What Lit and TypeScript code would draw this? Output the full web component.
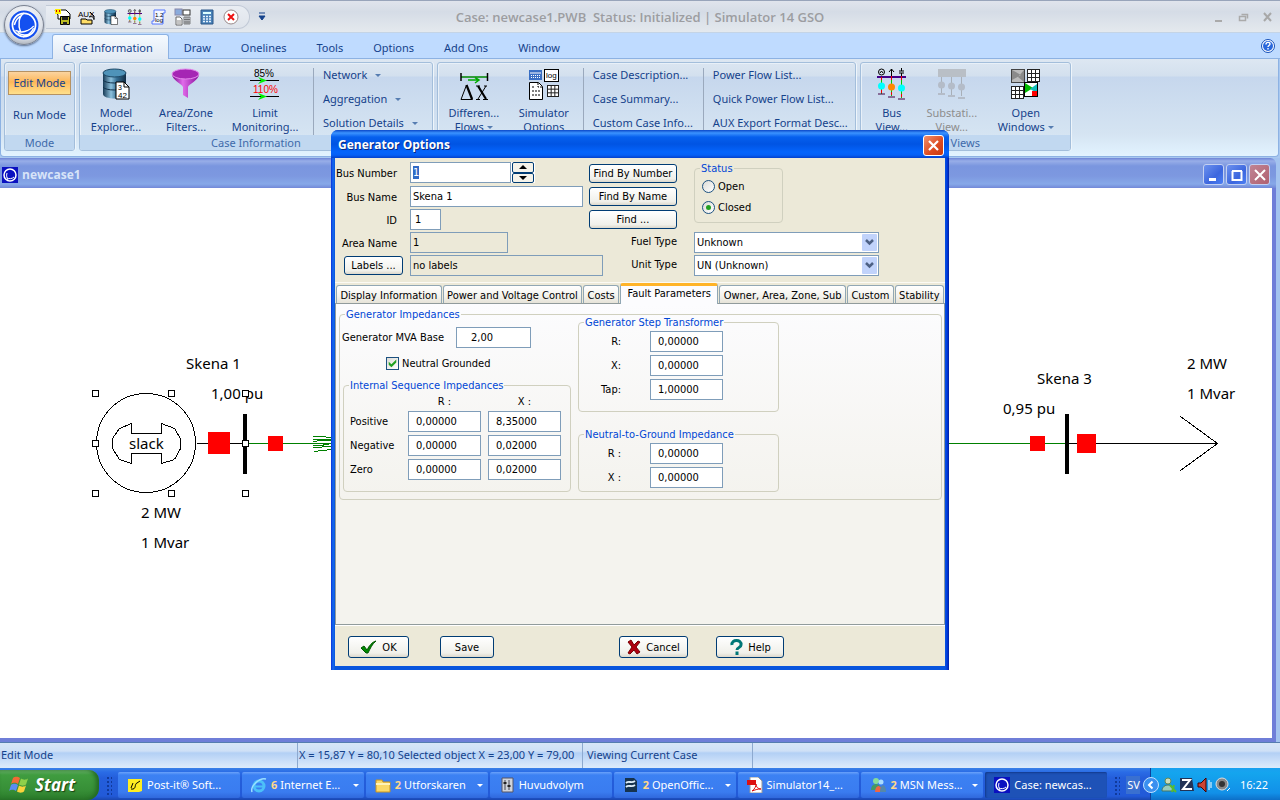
import { LitElement, html, svg, css, nothing } from "lit";
import { customElement, query } from "lit/decorators.js";
import { classMap } from "lit/directives/class-map.js";

const globe = (size: number) => html`
  <svg width=${size} height=${size} viewBox="0 0 28 28" aria-hidden="true">
    <circle cx="14" cy="14" r="13.500" fill="#1450f0" />
    <circle cx="14" cy="14" r="10.800" fill="none" stroke="#fff" stroke-width="1.600" />
    <path d="M14 3C9 6 8 14 11 21M6 19c6 3 12 1 17-4M12 5c-4 2-6 5-7 9M13 25c5-1 8-4 10-8M8 21c4 3 8 3 12 1" fill="none" stroke="#fff" stroke-width="1.400" />
    <path d="M14 5c4-1 7 1 8 5l1 4c-3 4-6 5-10 4-3-5-2-10 1-13z" fill="#1450f0" />
  </svg>`;

const badge = html`
  <svg width="16" height="16" viewBox="0 0 16 16" aria-hidden="true">
    <rect width="16" height="16" fill="#0a10c0" />
    <circle cx="8" cy="8" r="6" fill="none" stroke="#fff" stroke-width="1.500" />
    <path d="M5 11c2 1 5 1 7-1M5 6c-1 3 0 5 1 7" fill="none" stroke="#fff" />
  </svg>`;

const busBars = svg`
  <path d="M1 9h29" stroke="#408" stroke-width="2" />
  <path d="M5.500 9v17M15.500 9v19M25.500 9v21" stroke="#0c0" />
  <path d="M5.500 9v3M15.500 9v3M25.500 9v3M15.500 24v3M5.500 22v3M25.500 26v3M15.500 5v4M25.500 5v4" stroke="#e00" />
  <path d="M2 26h7M12 29h7M22 31h7" stroke="#404" />
  <circle cx="5.500" cy="18" r="3.500" fill="#0ff" /><circle cx="15.500" cy="19" r="3.500" fill="#f80" /><circle cx="25.500" cy="20" r="3.500" fill="#0ff" />
  <circle cx="5.500" cy="4" r="3" fill="none" stroke="#000" /><path d="M4 5l1.500-2L7 5" fill="none" stroke="#000" />
  <path d="M15.500 8V1M13 4l2.500-3L18 4M25.500 0v3M23 3h5M23 5h5M25.500 5v3" fill="none" stroke="#000" />`;

const cylinder = (id: string) => svg`
  <defs><linearGradient id=${id}><stop offset="0" stop-color="#173a56" /><stop offset=".35" stop-color="#8cc0dc" /><stop offset=".6" stop-color="#356e93" /><stop offset="1" stop-color="#122c44" /></linearGradient></defs>
  <path d="M3 5v21c0 6 23 6 23 0V5z" fill="url(#${id})" />
  <ellipse cx="14.500" cy="5" rx="11.500" ry="4" fill="#4f93b9" stroke="#1d4866" />
  <path d="M3 12c2 4 21 4 23 0M3 19c2 4 21 4 23 0" fill="none" stroke="#12324c" />
  <path d="M16 14h8l5 5v12H16z" fill="#fff" stroke="#000" /><path d="M24 14v5h5" fill="none" stroke="#000" />`;

const gridGlyph = (x: number, y: number, s: number) => svg`
  <rect x=${x} y=${y} width=${s} height=${s} fill="#fff" stroke="#222" />
  <path d="M${x + s / 3} ${y}v${s}M${x + (2 * s) / 3} ${y}v${s}M${x} ${y + s / 3}h${s}M${x} ${y + (2 * s) / 3}h${s}" stroke="#222" />`;

const ribbonIcons: Record<string, unknown> = {
  model: svg`${cylinder("cyl")}
    <text x="18" y="22" font-size="7">3</text><text x="18" y="30" font-size="8">42</text>`,
  funnel: svg`
    <defs><linearGradient id="fun"><stop offset="0" stop-color="#7a0a8c" /><stop offset=".4" stop-color="#e06bea" /><stop offset="1" stop-color="#8a0f9c" /></linearGradient></defs>
    <path d="M2 6c0 6 10 10 11 13v8l5 3V19c1-3 11-7 11-13z" fill="url(#fun)" />
    <ellipse cx="15.500" cy="6" rx="13.500" ry="5" fill="#a526b4" stroke="#e48bec" />`,
  limit: svg`
    <text x="5" y="9" font-size="10">85%</text><text x="4" y="25" font-size="10" fill="#f00">110%</text>
    <path d="M1 12.500h29M1 28.500h29" stroke="#000" /><path d="M9 9l9 3.500L9 16l3-3.500zM9 25l9 3.500L9 32l3-3.500z" fill="#0e0" />`,
  flows: svg`
    <path d="M3 9h26" stroke="#080" stroke-width="1.500" /><path d="M3 5v8M29.500 5v8" stroke="#000" stroke-width="1.500" />
    <path d="M10 12h10M17 9.500l4 2.500-4 3" fill="none" stroke="#0a0" stroke-width="1.500" />
    <path d="M8.500 17L3 31.500h11.500z" fill="none" stroke="#000" /><path d="M8.500 17l5.500 14" stroke="#000" stroke-width="2.200" />
    <path d="M20 18l8 13" stroke="#000" stroke-width="2.200" /><path d="M18 18h4M26 18h3M18 31.500h4M25 31.500h5M28 18l-8 13" stroke="#000" />`,
  options: svg`
    <rect x="1" y="2" width="13" height="10" fill="#3a6fc4" /><path d="M2 5h11" stroke="#fff" /><path d="M3 7.500h10M3 9.500h10" stroke="#fff" stroke-dasharray="1 1" />
    <rect x="16.500" y="1.500" width="14" height="12" fill="#fff" stroke="#000" /><text x="18" y="10" font-size="8">log</text>
    <path d="M1.500 14.500h9l4 4v13h-13z" fill="#fff" stroke="#000" /><path d="M4 19h3M4 23h8M4 27h8M10 15v4h4" fill="none" stroke="#000" stroke-dasharray="2 1" />
    ${gridGlyph(19.5, 17.5, 11)}`,
  bus: busBars,
  sub: svg`<rect x="2" y="1" width="28" height="8" fill="#b9bfc6" />
    <path d="M5.500 9v16M15.500 9v18M25.500 9v19" stroke="#a8afb8" /><g fill="#b4bcc8"><circle cx="5.500" cy="17" r="3.500" /><circle cx="15.500" cy="18" r="3.500" /><circle cx="25.500" cy="19" r="3.500" /><path d="M2 25h7v2H2zM12 27h7v2h-7zM22 29h7v2h-7z" /></g>`,
  windows: svg`
    <rect x="1.500" y="1.500" width="13" height="13" fill="#bbb" stroke="#444" /><path d="M2 2l9 5-9 5zM14 2l-6 7 6 5" fill="#8a8a8a" />
    ${gridGlyph(17.5, 1.5, 12)}${gridGlyph(1.5, 18.5, 12)}
    <rect x="14.500" y="14.500" width="13" height="14" fill="#fff" stroke="#000" /><path d="M15 15l8 5-8 5z" fill="#0b0" /><path d="M20 21l7-5v9z" fill="#1bb" /><rect x="22" y="23" width="5" height="5" fill="#f00" />`,
};

const quickIcons: { name: string; art: unknown }[] = [
  { name: "Save case", art: svg`<path d="M0 1h11l4 4v5H3V6z" fill="#fff" stroke="#000" /><path d="M0 0h6v5H0z" fill="#fe0" /><path d="M1 2h1M4 2h1" stroke="#c00" stroke-width="2" /><path d="M5.500 7.500h9v8h-9z" fill="#bb2" stroke="#000" /><path d="M7 8h6v3H7zM8 13h4v3H8z" fill="#222" />` },
  { name: "Open AUX file", art: svg`<text x="-1" y="8" font-size="8">AUX</text><path d="M2 10h5l1 1h5v4H2z" fill="#fd6" stroke="#000" /><path d="M11 3l4 4v3M10 8c3-1 5 0 5 3" fill="none" stroke="#000" />` },
  { name: "Model explorer", art: svg`<g transform="scale(.5)">${cylinder("cyl2")}</g>` },
  { name: "Bus view", art: svg`<g transform="scale(.5)">${busBars}</g>` },
  { name: "Log", art: svg`<path d="M3 1h11v3h-2v11H1v-3h2z" fill="#f4f7ff" stroke="#57f" /><text x="4" y="8" font-size="6">1.2</text><text x="4" y="13" font-size="6">log</text>` },
  { name: "Simulator options", art: svg`<rect x="0" y="0" width="7" height="6" fill="#8aabdc" stroke="#88a" /><rect x="8" y="1" width="7" height="5" fill="#fff" stroke="#333" /><path d="M1 8h4l2 2v6H1z" fill="#fff" stroke="#666" /><path d="M2 12h4M2 14h4" stroke="#888" /><path d="M9 8h6v7H9zM11 8v7M13 8v7M9 10.500h6M9 13h6" fill="none" stroke="#555" stroke-width=".7" />` },
  { name: "Calculator", art: svg`<path d="M2 1h12v14H2z" fill="#4a82b8" stroke="#2a5688" /><path d="M4 3h8v2H4z" fill="#dff" /><path d="M4 7.500h9M4 10h9M4 12.500h9" stroke="#e8f4ff" stroke-width="1.500" stroke-dasharray="2 1" />` },
  { name: "Abort", art: svg`<circle cx="8" cy="8" r="7" fill="#fff" stroke="#988" /><path d="M5 5l6 6M11 5l-6 6" stroke="#e11" stroke-width="2" />` },
];

type Tool = { label: string[]; icon: string; size?: string; drop?: boolean; off?: boolean };
type Group = { title: string; tools: Tool[]; lists: { label: string; drop?: boolean }[][] };

const groups: Group[] = [
  {
    title: "Case Information",
    tools: [
      { label: ["Model", "Explorer..."], icon: "model" },
      { label: ["Area/Zone", "Filters..."], icon: "funnel" },
      { label: ["Limit", "Monitoring..."], icon: "limit", size: "wide" },
    ],
    lists: [[{ label: "Network", drop: true }, { label: "Aggregation", drop: true }, { label: "Solution Details", drop: true }]],
  },
  {
    title: "",
    tools: [
      { label: ["Differen...", "Flows"], icon: "flows", drop: true },
      { label: ["Simulator", "Options"], icon: "options" },
    ],
    lists: [
      [{ label: "Case Description..." }, { label: "Case Summary..." }, { label: "Custom Case Info..." }],
      [{ label: "Power Flow List..." }, { label: "Quick Power Flow List..." }, { label: "AUX Export Format Desc..." }],
    ],
  },
  {
    title: "Views",
    tools: [
      { label: ["Bus", "View..."], icon: "bus", size: "slim" },
      { label: ["Substati...", "View..."], icon: "sub", size: "slim", off: true },
      { label: ["Open", "Windows"], icon: "windows", size: "wide", drop: true },
    ],
    lists: [],
  },
];

const NOTO = css`"Noto Sans", sans-serif`;
const DEJAVU = css`"DejaVu Sans Condensed", "Noto Sans", sans-serif`;

@customElement("app-ribbon")
class AppRibbon extends LitElement {
  static styles = css`
    :host { display: block; position: relative; font: 11px/14px ${NOTO}; color: #15428b; }
    * { box-sizing: border-box; }
    button { font: inherit; color: inherit; background: none; border: 0; padding: 0; margin: 0; white-space: nowrap; }
    .title { display: grid; grid-template-columns: 1fr auto 1fr; align-items: center; height: 33px; border-top: 1px solid #98a4ba; border-bottom: 1px solid #c4d4e6; background: linear-gradient(#e0e4ec, #d5dce6 35%, #e4e9ee); }
    .start { display: flex; align-items: center; padding-left: 46px; }
    .quick { display: flex; align-items: center; gap: 8px; height: 24px; padding: 0 10px 0 9px; border: 1px solid #c1c9d6; border-left: 0; border-radius: 0 12px 12px 0; background: linear-gradient(#e9edf3, #dfe4eb); }
    .quick button { width: 16px; height: 16px; }
    .quick svg { display: block; overflow: visible; }
    .more { width: 8px; margin-left: 8px; }
    .name { font: 600 13px/16px "Open Sans", sans-serif; color: #9c9da1; white-space: pre; }
    .caption { display: flex; justify-content: flex-end; gap: 9px; padding-right: 5px; }
    .caption svg { display: block; }
    .tabs { display: flex; align-items: flex-end; height: 26px; padding: 0 5px 0 52px; background: #bfdbff; border-bottom: 1px solid #8db2e3; }
    .tabs button { height: 25px; padding: 4px 15px 0; }
    .tabs .on { height: 25px; margin-bottom: -1px; padding: 2px 15px 0 10px; border: 1px solid #8db2e3; border-bottom: 0; border-radius: 3px 3px 0 0; background: linear-gradient(#f5faff, #e2eaf4); }
    .spacer { flex: 1; }
    .tabs .help { align-self: center; height: 14px; padding: 0; }
    .help svg { display: block; }
    .body { display: flex; gap: 4px; height: 98px; margin: 0 1px 0 0; padding: 3px 3px 5px; border: 1px solid #8db2e3; border-top: 0; border-radius: 0 0 4px 4px; background: linear-gradient(#dde7f2, #d3e0ee 17px, #c6d7ed 18px, #d5e4f2 75px, #e2f3ff); }
    .wrap { background: #a9c8f0; padding-bottom: 1px; }
    .group { display: flex; flex-direction: column; border: 1px solid #a3bedb; border-radius: 3px; box-shadow: inset 1px 1px #e8f0f8, 1px 0 #eef5fb; overflow: hidden; }
    .group .row { flex: 1; min-height: 0; display: flex; align-items: stretch; padding: 5px 0 0 1px; }
    .foot { height: 15px; text-align: center; line-height: 15px; color: #3e6aaa; background: #c1d8f0; }
    .mode { width: 71px; }
    .mode .row { flex-direction: column; padding: 8px 3px; gap: 8px; }
    .mode button { height: 24px; }
    .mode .on { border: 1px solid #b59263; background: linear-gradient(#fbd4a0, #fdb758 45%, #ffc468 60%, #ffe08c); }
    .tool { display: flex; flex-direction: column; align-items: center; width: 70px; }
    .tool.wide { width: 88px; }
    .tool.slim { width: 60px; }
    .tool svg.art { flex: none; display: block; margin-bottom: 6px; overflow: visible; }
    .tool.off { color: #8d8d8d; }
    .drop { display: inline-block; width: 0; height: 0; margin: 0 0 2px 8px; border: 3px solid transparent; border-top-color: #567db1; border-bottom: 0; }
    .tool .drop { margin-left: 3px; }
    .list { display: flex; flex-direction: column; align-items: flex-start; gap: 10px; margin-left: 4px; padding: 0 6px 0 9px; border-left: 1px solid #9aa9bd; }
    .list:last-child { padding-right: 14px; }
    .list + .list { padding-right: 7px; }
    .orb { position: absolute; left: 4px; top: 5px; width: 40px; height: 40px; display: grid; place-items: center; border: 1px solid #7a8190; border-radius: 50%; background: radial-gradient(circle at 50% 35%, #fff, #dfe3ea 60%, #7f8894); box-shadow: 0 1px 2px #5a6d8c; }
    text { font-family: "Liberation Sans", sans-serif; }
  `;

  private drop(on?: boolean) {
    return on ? html`<i class="drop"></i>` : nothing;
  }

  render() {
    return html`
      <div class="title">
        <div class="start">
          <div class="quick">
            ${quickIcons.map((q) => html`<button aria-label=${q.name}><svg width="16" height="16" viewBox="0 0 16 16">${q.art}</svg></button>`)}
          </div>
          <button class="more" aria-label="Customize"><svg width="8" height="9" viewBox="0 0 8 9"><path d="M1 1h6" stroke="#15428b" /><path d="M1 4h6L4 8z" fill="#15428b" stroke="#15428b" /></svg></button>
        </div>
        <div class="name">Case: newcase1.PWB  Status: Initialized | Simulator 14 GSO</div>
        <div class="caption">
          <button aria-label="Minimize"><svg width="16" height="14"><path d="M4 11h7" stroke="#aaa" stroke-width="2" /></svg></button>
          <button aria-label="Restore"><svg width="16" height="14" fill="none" stroke="#aaa"><path d="M3.500 6.500h6v4h-6zM5.500 4.500h6v4" stroke-width="1.500" /></svg></button>
          <button aria-label="Close"><svg width="14" height="14"><path d="M3 3l7 8M10 3l-7 8" stroke="#a8a8a8" stroke-width="2" /></svg></button>
        </div>
      </div>
      <nav class="tabs">
        ${["Case Information", "Draw", "Onelines", "Tools", "Options", "Add Ons", "Window"].map(
          (t, i) => html`<button class=${classMap({ on: i === 0 })}>${t}</button>`
        )}
        <span class="spacer"></span>
        <button class="help" aria-label="Help">
          <svg width="14" height="14" viewBox="0 0 14 14"><circle cx="7" cy="7" r="6.500" fill="#fff" stroke="#1550b8" /><circle cx="7" cy="7" r="5" fill="#2a68dc" /><path d="M5 5.500c0-3 4-2.500 4-.5 0 1.500-2 1.500-2 3M7 9v1.500" fill="none" stroke="#fff" stroke-width="1.400" /></svg>
        </button>
      </nav>
      <div class="wrap">
        <div class="body">
          <section class="group mode">
            <div class="row"><button class="on">Edit Mode</button><button>Run Mode</button></div>
            <div class="foot">Mode</div>
          </section>
          ${groups.map(
            (g) => html`
              <section class="group">
                <div class="row">
                  ${g.tools.map(
                    (t) => html`
                      <button class=${classMap({ tool: true, off: !!t.off, [t.size ?? "std"]: true })} ?disabled=${!!t.off}>
                        <svg class="art" width="32" height="32" viewBox="0 0 32 32">${ribbonIcons[t.icon]}</svg>
                        <span>${t.label[0]}</span><span>${t.label[1]}${this.drop(t.drop)}</span>
                      </button>`
                  )}
                  ${g.lists.map((l) => html`<div class="list">${l.map((b) => html`<button>${b.label}${this.drop(b.drop)}</button>`)}</div>`)}
                </div>
                <div class="foot">${g.title}</div>
              </section>`
          )}
        </div>
      </div>
      <button class="orb" aria-label="Application menu">${globe(30)}</button>
    `;
  }
}

@customElement("app-oneline")
class AppOneline extends LitElement {
  static styles = css`
    :host { display: flex; flex-direction: column; min-height: 0; background: #a3c3ef; padding-right: 4px; }
    * { box-sizing: border-box; }
    .bar { display: flex; align-items: center; gap: 4px; height: 30px; padding: 3px 6px 0 2px; color: #d8e4f8; font: bold 12px/16px "Open Sans", sans-serif; background: linear-gradient(#6d84d6, #98aee8 3px, #7a96df 8px, #7d98e0 18px, #86a8e8 26px, #7288d8); border-radius: 0 6px 0 0; }
    .bar h2 { flex: 1; margin: 0; font: inherit; }
    .bar button { width: 21px; height: 21px; margin: 0; padding: 0; border: 1px solid #c3d0f2; border-radius: 3px; background: linear-gradient(135deg, #6d92ee, #3c66de 60%, #4c80f4); }
    .bar .group { display: flex; gap: 2px; }
    .bar .x { background: linear-gradient(135deg, #c08494, #b06070); }
    .bar svg { display: block; margin: auto; }
    .canvas { flex: 1; min-height: 0; width: 100%; display: block; background: #fff; border-right: 4px solid #6f7ed8; border-bottom: 4px solid #6f7ed8; }
    .canvas text { font: 15px ${NOTO}; }
  `;

  render() {
    const handles = [[95, 393], [171, 393], [245, 393], [95, 443], [245, 443], [95, 493], [171, 493], [245, 493]];
    return html`
      <header class="bar">
        <span>${badge}</span>
        <h2>newcase1</h2>
        <div class="group">
          <button aria-label="Minimize"><svg width="14" height="14"><path d="M2 11.500h7" stroke="#fff" stroke-width="3" /></svg></button>
          <button aria-label="Maximize"><svg width="14" height="14"><path d="M2 3h10M2.500 3v9h9V3" fill="none" stroke="#fff" stroke-width="2" /></svg></button>
          <button class="x" aria-label="Close"><svg width="14" height="14"><path d="M2 2l10 10M12 2L2 12" stroke="#fff" stroke-width="2" /></svg></button>
        </div>
      </header>
      <svg class="canvas">
        <g transform="translate(0 -188)" shape-rendering="crispEdges">
          <path d="M246 443.500h821" stroke="#008000" />
          <path d="M313 436.500h8l10 1M313 439.500h18M313 441.500l8-1h10M313 445.500h8l10-2M313 447.500l18-1M314 451.500l17-2" fill="none" stroke="#008000" />
          <path d="M197 443.500h48M1067 443.500h151" stroke="#000" />
          <circle cx="146" cy="443" r="49.500" fill="none" stroke="#000" />
          <path d="M131.500 423.500v10h30v-10l13 5 6 10v10l-6 11-13 4v-10h-30v10l-12-4-7-11v-10l7-10z" fill="none" stroke="#000" />
          <path d="M1180.500 416.500l37 27-37 27" fill="none" stroke="#000" />
          <path d="M208 432h22v22h-22zM268 436h15v15h-15zM1030 436h15v15h-15zM1077 434h19v19h-19z" fill="#f00" />
          <path d="M243 414h4v60h-4zM1065 414h4v60h-4z" />
          <text x="186" y="369">Skena 1</text>
          <text x="211" y="399">1,00 pu</text>
          <text x="129" y="449">slack</text>
          <text x="141" y="518">2 MW</text>
          <text x="141" y="548">1 Mvar</text>
          <text x="1037" y="384">Skena 3</text>
          <text x="1003" y="414">0,95 pu</text>
          <text x="1187" y="369">2 MW</text>
          <text x="1187" y="399">1 Mvar</text>
          ${handles.map(([x, y]) => svg`<rect x=${x - 2.5} y=${y - 2.5} width="6" height="6" fill="#fff" stroke="#000" />`)}
        </g>
      </svg>
    `;
  }
}

@customElement("generator-dialog")
class GeneratorDialog extends LitElement {
  static styles = css`
    :host { display: flex; flex-direction: column; padding: 0 4px 4px; border-radius: 7px 7px 0 0; background: linear-gradient(90deg, #0831d9, #166aee 2px, #0855dd 4px, #0855dd calc(100% - 4px), #003be0 calc(100% - 2px), #001ea0); font: 11px/13px ${DEJAVU}; color: #000; }
    * { box-sizing: border-box; }
    input, select, button { font: inherit; color: inherit; margin: 0; border-radius: 0; }
    label { white-space: nowrap; }
    .bar { display: flex; align-items: center; justify-content: space-between; height: 28px; margin: 0 -4px; padding: 2px 5px 0 7px; border-radius: 7px 7px 0 0; background: linear-gradient(#0a47c8, #3b93ff 3px, #0660ee 7px, #0054e3 14px, #0464fc 22px, #0560f6 25px, #0340cc); }
    h1 { margin: 0; font: bold 12px/16px "Open Sans", sans-serif; color: #fff; text-shadow: 1px 1px #0a2a80; }
    .x { width: 21px; height: 21px; padding: 0; border: 1px solid #fff; border-radius: 3px; background: linear-gradient(135deg, #f0906c, #dc4a20 60%, #c83a10); }
    .x svg { display: block; margin: auto; }
    .top { display: grid; grid-template-columns: 75px 179px 105px 185px; grid-template-rows: 22px repeat(4, 21px); row-gap: 2px; padding: 4px 0 6px; background: #ece9d8; border-bottom: 1px solid #fbfaf4; }
    .lab { grid-column: 1; align-self: center; justify-self: end; padding: 1px 13px 0 0; }
    .c2 { grid-column: 2; }
    .r1 { grid-row: 1; } .r2 { grid-row: 2; } .r3 { grid-row: 3; } .r4 { grid-row: 4; } .r5 { grid-row: 5; }
    .text { height: 21px; min-width: 0; padding: 0 2px 1px; border: 1px solid #7f9db9; background: #fff; outline: none; }
    .text::selection { background: #316ac5; color: #fff; }
    .text[readonly] { background: #ece9d8; }
    .num { width: 101px; }
    .name { width: 173px; }
    .id { width: 31px; padding-left: 4px; }
    .area { width: 98px; }
    .none { width: 193px; grid-column: 2 / 4; }
    .spin { display: flex; }
    .arrows { display: flex; flex-direction: column; justify-content: center; width: 24px; height: 21px; padding: 0 1px; background: #fff; }
    .arrows button { flex: 1; display: grid; place-items: center; padding: 0; border: 1px solid #003c74; border-radius: 2px; background: #f5f3ea; }
    .push { height: 19px; padding: 0; border: 1px solid #003c74; border-radius: 3px; background: linear-gradient(#fff, #f0f0ea 80%, #dcd8cc); }
    .find { grid-column: 3; width: 88px; align-self: center; }
    .labels { grid-column: 1; width: 59px; justify-self: end; margin-right: 7px; align-self: center; }
    .type { grid-column: 3; justify-self: end; padding: 3px 17px 0 0; }
    .pick { grid-column: 4; display: grid; align-items: center; justify-items: end; }
    .pick > * { grid-area: 1 / 1; }
    .pick select { appearance: none; width: 100%; height: 21px; padding: 0 2px; border: 1px solid #7f9db9; background: #fff; }
    .pick svg { margin-right: 2px; pointer-events: none; }
    fieldset { margin: 0; min-width: 0; padding: 0; border: 1px solid #d0d0bf; border-radius: 4px; }
    legend { margin-left: 5px; padding: 0 1px; line-height: 13px; color: #0046d5; }
    .status { grid-column: 4; grid-row: 1 / 4; width: 89px; height: 61px; padding-top: 1px; }
    .status label { display: flex; align-items: center; gap: 3px; height: 21px; padding-left: 7px; }
    input[type="radio"], input[type="checkbox"] { appearance: none; flex: none; display: grid; place-items: center; width: 13px; height: 13px; border: 1px solid #1c5180; background: linear-gradient(135deg, #dcdcd7, #fff); }
    input[type="radio"] { border-radius: 50%; }
    input[type="radio"]:checked::before { content: ""; width: 5px; height: 5px; border-radius: 50%; background: #22a022; }
    input[type="checkbox"]:checked::before { content: ""; width: 9px; height: 9px; background: #21a121; clip-path: polygon(8% 30%, 38% 58%, 92% 5%, 92% 38%, 38% 92%, 8% 64%); }
    .tabs { display: flex; gap: 1px; align-items: flex-end; height: 20px; padding: 0 1px; background: #ece9d8; }
    .tabs button { flex: 1 1 auto; height: 18px; padding: 1px 0 0; white-space: nowrap; border: 1px solid #91a7b4; border-bottom: 0; border-radius: 3px 3px 0 0; background: linear-gradient(#fff, #f3f2ec 60%, #e6e3d8); }
    .tabs .on { position: relative; height: 21px; margin-bottom: -1px; padding: 0 3px 3px; border-top: 3px solid #ffb428; background: #fcfcfe; }
    .page { flex: 1; padding: 4px 2px 0 3px; border: 1px solid #919b9c; background: linear-gradient(#fcfcfe, #f4f3ee 60%, #f4f3ee); }
    .all { display: grid; grid-template-columns: 228px 201px; column-gap: 7px; height: 178px; padding-left: 3px; }
    .base { display: flex; align-items: center; height: 21px; margin-top: 6px; }
    .base label { flex: 1; margin-left: -1px; }
    .base .text { width: 75px; margin-right: 40px; padding-left: 14px; }
    .check { display: flex; align-items: center; gap: 3px; margin: 9px 0 9px 43px; }
    .seq { display: grid; grid-template-columns: 51px 73px 73px; gap: 3px 7px; padding: 2px 0 11px 6px; align-items: center; }
    .seq span { text-align: center; line-height: 12px; margin-top: 2px; }
    .seq .text, .pair .text { width: 73px; padding-left: 7px; }
    .pair { display: grid; grid-template-columns: 42px 73px; gap: 3px 29px; align-items: center; }
    .pair label { justify-self: end; }
    .right { margin-top: -5px; }
    .step { height: 96px; margin-bottom: 16px; }
    .step, .ground { padding-top: 2px; }
    .ground { height: 64px; }
    .buttons { display: flex; align-items: center; height: 41px; padding: 2px 0 0 13px; background: #ece9d8; border-top: 1px solid #fff; }
    .buttons .push { display: flex; align-items: center; justify-content: center; gap: 5px; height: 22px; }
    .ok { width: 61px; margin-right: 31px; }
    .save { width: 54px; margin-right: 125px; }
    .cancel { width: 69px; margin-right: 28px; }
    .help { width: 68px; }
  `;

  @query("#num") private num!: HTMLInputElement;

  firstUpdated() {
    this.num.focus();
    this.num.select();
  }

  private picker(id: string, row: string, value: string) {
    return html`<span class="pick ${row}">
      <select id=${id}><option>${value}</option></select>
      <svg width="15" height="17"><rect width="15" height="17" rx="1" fill="#c1d3fb" /><path d="M4 6l3.500 3.500L11 6" fill="none" stroke="#4d6185" stroke-width="2.500" /></svg>
    </span>`;
  }

  private field(id: string, value: string, label?: string) {
    return html`<input class="text" id=${id} .value=${value} aria-label=${label ?? nothing} />`;
  }

  render() {
    return html`
      <header class="bar">
        <h1>Generator Options</h1>
        <button class="x" aria-label="Close"><svg width="15" height="15"><path d="M3 3l9 9M12 3l-9 9" stroke="#fff" stroke-width="2.200" /></svg></button>
      </header>
      <div class="top">
        <label class="lab r1" for="num">Bus Number</label>
        <div class="c2 r1 spin">
          <input class="text num" id="num" .value=${"1"} />
          <span class="arrows">
            <button aria-label="Up"><svg width="8" height="4"><path d="M0 4l4-4 4 4z" /></svg></button>
            <button aria-label="Down"><svg width="8" height="4"><path d="M0 0l4 4 4-4z" /></svg></button>
          </span>
        </div>
        <label class="lab r2" for="name">Bus Name</label><input class="text name c2 r2" id="name" .value=${"Skena 1"} />
        <label class="lab r3" for="id">ID</label><input class="text id c2 r3" id="id" .value=${"1"} />
        <label class="lab r4" for="area">Area Name</label><input class="text area c2 r4" id="area" readonly .value=${"1"} />
        <button class="push labels r5">Labels ...</button><input class="text none r5" aria-label="Labels" readonly .value=${"no labels"} />
        <button class="push find r1">Find By Number</button>
        <button class="push find r2">Find By Name</button>
        <button class="push find r3">Find ...</button>
        <label class="type r4" for="fuel">Fuel Type</label>${this.picker("fuel", "r4", "Unknown")}
        <label class="type r5" for="unit">Unit Type</label>${this.picker("unit", "r5", "UN (Unknown)")}
        <fieldset class="status">
          <legend>Status</legend>
          <label><input type="radio" name="status" />Open</label>
          <label><input type="radio" name="status" checked />Closed</label>
        </fieldset>
      </div>
      <nav class="tabs">
        ${["Display Information", "Power and Voltage Control", "Costs", "Fault Parameters", "Owner, Area, Zone, Sub", "Custom", "Stability"].map(
          (t) => html`<button class=${classMap({ on: t === "Fault Parameters" })}>${t}</button>`
        )}
      </nav>
      <div class="page">
        <fieldset>
          <legend>Generator Impedances</legend>
          <div class="all">
            <div>
              <div class="base"><label for="mva">Generator MVA Base</label>${this.field("mva", "2,00")}</div>
              <label class="check"><input type="checkbox" checked />Neutral Grounded</label>
              <fieldset>
                <legend>Internal Sequence Impedances</legend>
                <div class="seq">
                  <i></i><span>R :</span><span>X :</span>
                  <label for="pr">Positive</label>${this.field("pr", "0,00000")}${this.field("px", "8,35000", "Positive X")}
                  <label for="nr">Negative</label>${this.field("nr", "0,00000")}${this.field("nx", "0,02000", "Negative X")}
                  <label for="zr">Zero</label>${this.field("zr", "0,00000")}${this.field("zx", "0,02000", "Zero X")}
                </div>
              </fieldset>
            </div>
            <div class="right">
              <fieldset class="step">
                <legend>Generator Step Transformer</legend>
                <div class="pair">
                  <label for="sr">R:</label>${this.field("sr", "0,00000")}
                  <label for="sx">X:</label>${this.field("sx", "0,00000")}
                  <label for="st">Tap:</label>${this.field("st", "1,00000")}
                </div>
              </fieldset>
              <fieldset class="ground">
                <legend>Neutral-to-Ground Impedance</legend>
                <div class="pair">
                  <label for="gr">R :</label>${this.field("gr", "0,00000")}
                  <label for="gx">X :</label>${this.field("gx", "0,00000")}
                </div>
              </fieldset>
            </div>
          </div>
        </fieldset>
      </div>
      <footer class="buttons">
        <button class="push ok"><svg width="17" height="16"><path d="M1 9l3-2 3 4c2-4 5-8 9-9-4 3-6 8-8 12H6z" fill="#080" stroke="#050" /></svg>OK</button>
        <button class="push save">Save</button>
        <button class="push cancel"><svg width="14" height="16"><path d="M1 3l3-2 3 5 4-4 2 1-4 5 4 5-3 2-3-4-4 4-2-1 4-6z" fill="#b00010" stroke="#700" /></svg>Cancel</button>
        <button class="push help"><svg width="14" height="16"><path d="M3 6c-1-6 10-6 9 0 0 3-4 2-4 5M8 12.500V16" fill="none" stroke="#077" stroke-width="3" /></svg>Help</button>
      </footer>
    `;
  }
}

const tasks: { label: string; count?: string; art: unknown; on?: boolean }[] = [
  { label: "Post-it® Soft...", art: svg`<path d="M1 2h14v12l-3 1H1z" fill="#fe2" /><path d="M4 12c6 1 3-5 6-6l3-2M6 6l-2 5" stroke="#000" fill="none" />` },
  { label: "Internet E...", count: "6", art: svg`<circle cx="8" cy="9" r="5" fill="none" stroke="#4cc0f8" stroke-width="3" /><path d="M4 9.500h9" stroke="#4cc0f8" stroke-width="2" /><path d="M1 15C-1 9 9 0 15 2" fill="none" stroke="#9be0ff" stroke-width="1.500" />` },
  { label: "Utforskaren", count: "2", art: svg`<path d="M1 3h6l1 2h7v10H1z" fill="#fbd968" stroke="#c89420" /><path d="M1 7h14" stroke="#fff3b8" stroke-width="2" />` },
  { label: "Huvudvolym", art: svg`<path d="M3 1h11v14H3z" fill="#cfd3da" stroke="#556" /><path d="M6 3v10M10 3v10" stroke="#445" /><path d="M4.500 6h3M8.500 9h3" stroke="#222" stroke-width="2" />` },
  { label: "OpenOffic...", count: "2", art: svg`<path d="M2 1h9l3 3v11H2z" fill="#16334f" /><path d="M3 6c3-3 5 1 9-2M3 10c3-3 5 1 9-2" fill="none" stroke="#dfeefa" stroke-width="1.800" />` },
  { label: "Simulator14_...", art: svg`<path d="M3 0h8l4 4v12H3z" fill="#fff" stroke="#999" /><path d="M0 3h9v5H0z" fill="#d11" /><path d="M5 14c3-2 4-5 4-7 0 3 2 5 5 5-4 0-6 1-9 2z" fill="none" stroke="#d11" />` },
  { label: "MSN Mess...", count: "2", art: svg`<circle cx="6" cy="4" r="3" fill="#8d9" /><path d="M1 13c0-8 10-8 10 0z" fill="#496" /><circle cx="11" cy="5" r="2.500" fill="#adf" /><path d="M5 15c0-8 7-8 7 0z" fill="#e64" /><path d="M10 15c0-9 6-9 6 0z" fill="#58a" />` },
  { label: "Case: newcas...", on: true, art: nothing },
];

@customElement("app-taskbar")
class AppTaskbar extends LitElement {
  static styles = css`
    :host { display: flex; height: 32px; font: 11px/14px ${NOTO}; color: #fff; background: linear-gradient(#3a80e8, #2a6ce6 4px, #245edb 10px, #225ad8 28px, #1a47b0); }
    * { box-sizing: border-box; }
    button { font: inherit; color: inherit; margin: 0; border: 0; text-align: left; }
    .start { display: flex; align-items: center; gap: 4px; width: 99px; margin: 2px 0 0; padding: 0 0 1px 9px; font: italic bold 17px/20px "Open Sans", sans-serif; text-shadow: 1px 1px 1px #1a4010; border-radius: 0 10px 12px 0; background: linear-gradient(#6fb870, #3f9c3f 5px, #378f37 20px, #2a7a2a); box-shadow: inset -3px 0 4px #236823; }
    .grip { width: 6px; margin: 8px 6px 4px 7px; background: radial-gradient(#103a9c 35%, transparent 45%) 0 0 / 4px 4px; }
    .tasks { flex: 1; display: flex; gap: 2px; min-width: 0; padding: 4px 0 2px; }
    .task { flex: 1 1 0; min-width: 0; display: flex; align-items: center; gap: 3px; padding: 0 5px 0 9px; border-radius: 2px; white-space: nowrap; background: linear-gradient(#6aa2fb, #3c81f3 3px, #3a7cf0 20px, #3068dc); }
    .task svg { flex: none; margin-right: 1px; }
    .task b { color: #ffd88a; }
    .task .label { flex: 1; }
    .task.on { background: #1e52b7; box-shadow: inset 1px 1px 2px #123a8c; }
    .drop { border: 3px solid transparent; border-top-color: #fff; border-bottom: 0; }
    .lang { align-self: center; margin: 2px 10px 0 0; padding: 2px 0 2px 1px; background: #3a70d0; }
    .tray { display: flex; align-items: center; gap: 2px; padding: 2px 12px 0 0; border-left: 1px solid #0e3f9c; background: linear-gradient(#1aa0f0, #14a5ee 5px, #1290e8 25px, #0d6fc8); }
    .tray time { margin-left: 7px; }
    .tray .back { width: 16px; height: 16px; margin-left: -8px; padding: 0; background: none; }
    svg { display: block; }
  `;

  render() {
    return html`
      <button class="start">
        <svg width="22" height="20" viewBox="0 0 22 20"><path d="M4 3c3-2 5-1 7 0l-2 6c-2-1-4-2-7 0z" fill="#f26a35" /><path d="M12 3.500c2 1 4 2 7 0l-2 6c-3 2-5 1-7 0z" fill="#8fd04a" /><path d="M2 10c3-2 5-1 7 0l-2 6c-2-1-4-2-7 0z" fill="#5a8cf0" /><path d="M10 10.500c2 1 4 2 7 0l-2 6c-3 2-5 1-7 0z" fill="#fbd33c" /></svg>
        Start
      </button>
      <span class="grip"></span>
      <div class="tasks">
        ${tasks.map(
          (t) => html`<button class=${classMap({ task: true, on: !!t.on })}>
            ${t.on ? badge : html`<svg width="16" height="16" viewBox="0 0 16 16">${t.art}</svg>`}
            ${t.count ? html`<b>${t.count}</b>` : nothing}<span class="label">${t.label}</span>${t.count ? html`<i class="drop"></i>` : nothing}
          </button>`
        )}
      </div>
      <span class="grip"></span>
      <span class="lang">SV</span>
      <div class="tray">
        <button class="back" aria-label="Show hidden icons"><svg width="16" height="16"><circle cx="8" cy="8" r="7.500" fill="#3a90f0" stroke="#bfe0ff" /><path d="M9.500 4.500L6 8l3.500 3.500" fill="none" stroke="#fff" stroke-width="2" /></svg></button>
        <svg width="16" height="16"><circle cx="7" cy="4" r="3" fill="#cdb" stroke="#685" /><path d="M1 14c0-8 12-8 12 0z" fill="#9cb" stroke="#476" /><path d="M9 8l6 7M13 8l-2 7" stroke="#5b3" stroke-width="2" /></svg>
        <svg width="16" height="16"><path d="M1 1h12l2 13H1z" fill="#235" /><path d="M3 3h8L4 12h9" fill="none" stroke="#fff" stroke-width="2" /></svg>
        <svg width="16" height="16"><path d="M1 6h3l5-5v14l-5-5H1z" fill="#c43" stroke="#400" /><path d="M12 3v10M14 5v6" stroke="#fff" /></svg>
        <svg width="16" height="16"><circle cx="7" cy="7" r="6" fill="#888" stroke="#ddd" /><circle cx="7" cy="7" r="3" fill="#333" /><path d="M12 14l3-3" stroke="#fff" /></svg>
        <time>16:22</time>
      </div>
    `;
  }
}

@customElement("app-root")
class AppRoot extends LitElement {
  static styles = css`
    :host { display: flex; flex-direction: column; position: relative; height: 100vh; overflow: hidden; background: #bfdbff; }
    app-oneline { flex: 1; }
    .statusbar { display: flex; height: 26px; font: 11px/24px ${NOTO}; color: #15428b; background: linear-gradient(#d8e6f8, #cfe0f6 8px, #b3d0f5 10px, #d6e6fa 22px, #dcebfb); border-top: 1px solid #567db0; box-sizing: border-box; }
    .statusbar span { box-sizing: border-box; padding: 0 1px; border-right: 1px solid #8da9cf; white-space: nowrap; }
    .mode { width: 298px; }
    .pos { width: 285px; }
    .statusbar .case { width: 170px; padding-left: 4px; }
    generator-dialog { position: absolute; left: 331px; top: 130px; width: 618px; height: 540px; box-sizing: border-box; }
  `;

  render() {
    return html`
      <app-ribbon></app-ribbon>
      <app-oneline></app-oneline>
      <div class="statusbar">
        <span class="mode">Edit Mode</span>
        <span class="pos">X = 15,87 Y = 80,10 Selected object X = 23,00 Y = 79,00</span>
        <span class="case">Viewing Current Case</span>
      </div>
      <app-taskbar></app-taskbar>
      <generator-dialog></generator-dialog>
    `;
  }
}
